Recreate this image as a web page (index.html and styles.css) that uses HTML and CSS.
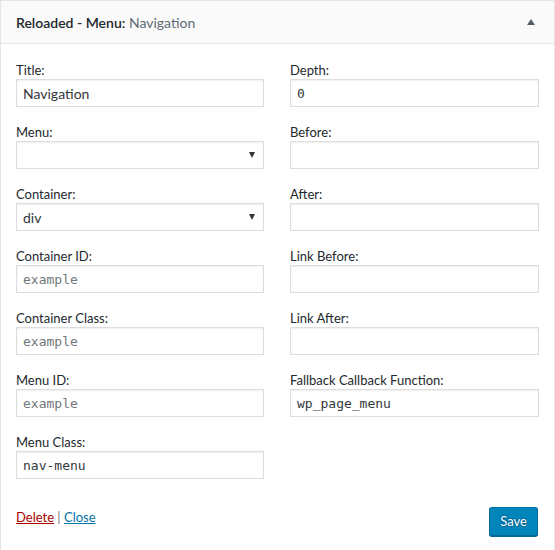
FILE: index.html
```html
<!DOCTYPE html>
<html>
<head>
<meta charset="utf-8">
<link rel="stylesheet" href="styles.css">
</head>
<body>
<div class="widget">
  <div class="widget-top">
    <h3 class="widget-title">Reloaded - Menu:<span class="in-title"> Navigation</span></h3>
    <span class="toggle"></span>
  </div>
  <div class="widget-inside">
    <div class="cols">
      <div class="col">
        <div class="field">
          <label>Title:</label>
          <input class="txt" type="text" value="Navigation">
        </div>
        <div class="field">
          <label>Menu:</label>
          <div class="select"><span></span><i class="arrow"></i></div>
        </div>
        <div class="field">
          <label>Container:</label>
          <div class="select"><span>div</span><i class="arrow"></i></div>
        </div>
        <div class="field">
          <label>Container ID:</label>
          <input class="txt mono" type="text" placeholder="example">
        </div>
        <div class="field">
          <label>Container Class:</label>
          <input class="txt mono" type="text" placeholder="example">
        </div>
        <div class="field">
          <label>Menu ID:</label>
          <input class="txt mono" type="text" placeholder="example">
        </div>
        <div class="field">
          <label>Menu Class:</label>
          <input class="txt mono" type="text" value="nav-menu">
        </div>
      </div>
      <div class="col">
        <div class="field">
          <label>Depth:</label>
          <input class="txt mono" type="text" value="0">
        </div>
        <div class="field">
          <label>Before:</label>
          <input class="txt mono" type="text">
        </div>
        <div class="field">
          <label>After:</label>
          <input class="txt mono" type="text">
        </div>
        <div class="field">
          <label>Link Before:</label>
          <input class="txt mono" type="text">
        </div>
        <div class="field">
          <label>Link After:</label>
          <input class="txt mono" type="text">
        </div>
        <div class="field">
          <label>Fallback Callback Function:</label>
          <input class="txt mono" type="text" value="wp_page_menu">
        </div>
      </div>
    </div>
    <div class="control-actions">
      <div class="links"><a class="delete" href="#">Delete</a> | <a class="close" href="#">Close</a></div>
      <button class="button-primary" type="button">Save</button>
    </div>
  </div>
</div>
</body>
</html>
```
FILE: styles.css
```css
html, body {
  margin: 0;
  padding: 0;
  background: #fff;
}
body {
  font-family: "Lato", "Open Sans", sans-serif;
  font-size: 13px;
  color: #23282d;
}
.widget {
  box-sizing: border-box;
  width: 555px;
  min-height: 580px;
  border: 1px solid #e5e5e5;
  background: #fff;
}
.widget-top {
  height: 42px;
  background: #fafafa;
  border-bottom: 1px solid #e5e5e5;
  display: flex;
  align-items: center;
  justify-content: space-between;
  padding: 0 15px;
}
.widget-title {
  margin: 0;
  font-size: 14px;
  font-weight: 600;
  color: #23282d;
}
.in-title {
  font-weight: 400;
  color: #606a73;
}
.toggle {
  width: 0;
  height: 0;
  border-left: 4px solid transparent;
  border-right: 4px solid transparent;
  border-bottom: 6px solid #555d66;
  margin-right: 4px;
}
.widget-inside {
  padding: 18px 15px 0 15px;
}
.cols {
  display: grid;
  grid-template-columns: 248px 249px;
  column-gap: 26px;
}
.field {
  display: flex;
  flex-direction: column;
  margin-bottom: 17px;
}
.field label {
  line-height: 17px;
  color: #23282d;
}
.txt, .select {
  box-sizing: border-box;
  height: 28px;
  width: 100%;
  margin: 0;
  border: 1px solid #ddd;
  box-shadow: inset 0 1px 2px rgba(0,0,0,.07);
  background: #fff;
  color: #32373c;
  padding: 3px 6px;
  outline: none;
  font-family: "Lato", "Open Sans", sans-serif;
  font-size: 14px;
}
.mono {
  font-family: "DejaVu Sans Mono", "Liberation Mono", monospace;
  font-size: 13px;
}
.mono::placeholder {
  color: #72777c;
}
.select {
  display: flex;
  align-items: center;
  justify-content: space-between;
  padding: 0 8px 0 6px;
}
.arrow {
  width: 0;
  height: 0;
  border-left: 3px solid transparent;
  border-right: 3px solid transparent;
  border-top: 6px solid #32373c;
}
.control-actions {
  display: flex;
  justify-content: space-between;
  align-items: flex-start;
  margin-top: 11px;
}
.links {
  margin-top: 2px;
  color: #72777c;
}
.delete {
  color: #a00;
}
.close {
  color: #0073aa;
}
.button-primary {
  box-sizing: border-box;
  height: 29px;
  padding: 0 10px 1px;
  background: #0085ba;
  border: 1px solid #0073aa;
  border-color: #0073aa #006799 #006799;
  border-radius: 3px;
  box-shadow: 0 1px 0 #006799;
  color: #fff;
  text-shadow: 0 -1px 1px #006799, 1px 0 1px #006799, 0 1px 1px #006799, -1px 0 1px #006799;
  font-family: "Lato", "Open Sans", sans-serif;
  font-size: 13px;
  margin-right: 1px;
}
```
